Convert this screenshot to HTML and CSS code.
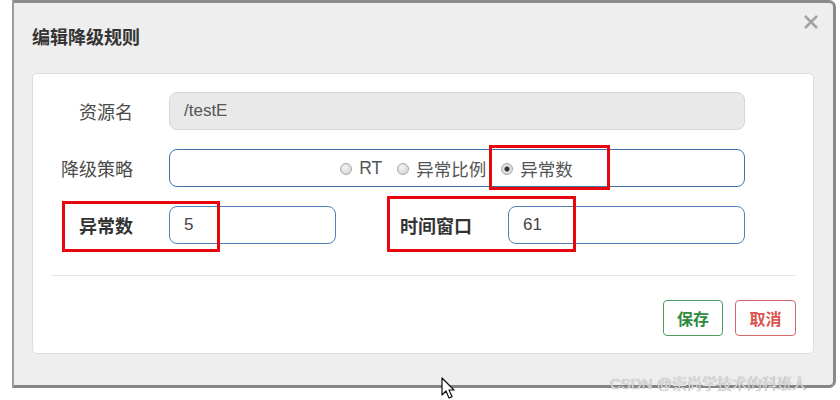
FILE: index.html
```html
<!DOCTYPE html>
<html lang="zh-CN">
<head>
    <meta charset="UTF-8">
    <title>编辑降级规则</title>
    <link rel="stylesheet" href="styles.css">
</head>
<body>
    <div class="modal">
        <div class="modal-header">
            <h1>编辑降级规则</h1>
            <span class="close">
                <svg width="14" height="14" viewBox="0 0 14 14"><path d="M1 1 L13 13 M13 1 L1 13" stroke="#a3a3a3" stroke-width="2.6" fill="none"/></svg>
            </span>
        </div>

        <div class="panel">
            <div class="row">
                <label class="label">资源名</label>
                <div class="field field-disabled">/testE</div>
            </div>

            <div class="row">
                <label class="label">降级策略</label>
                <div class="field field-radios">
                    <span class="radio"><i class="dot"></i>RT</span>
                    <span class="radio"><i class="dot"></i>异常比例</span>
                    <span class="radio"><i class="dot checked"></i>异常数</span>
                </div>
            </div>

            <div class="row row-split">
                <label class="label strong">异常数</label>
                <div class="field">5</div>
                <label class="label strong">时间窗口</label>
                <div class="field">61</div>
            </div>

            <hr class="divider">

            <div class="footer">
                <button class="btn btn-save">保存</button>
                <button class="btn btn-cancel">取消</button>
            </div>

            <!-- annotations -->
            <div class="mark mark-strategy"></div>
            <div class="mark mark-count"></div>
            <div class="mark mark-window"></div>
        </div>
    </div>

    <div class="watermark">CSDN @崇尚学技术的科班人</div>

    <svg class="cursor" width="14" height="24" viewBox="0 0 14 24">
        <path d="M1 1 L1 18 L5 14 L8 21 L11 19.6 L8 13 L13 13 Z" fill="#fff" stroke="#111" stroke-width="1.2" stroke-linejoin="round"/>
    </svg>
</body>
</html>
```

FILE: styles.css
```css
body, html {
    margin: 0;
    height: 100%;
    background-color: #fff;
    font-family: "Liberation Sans", "Noto Sans CJK SC", sans-serif;
    color: #444;
}

body {
    padding-left: 12px;
    position: relative;
    overflow: hidden;
}

.modal {
    box-sizing: border-box;
    width: 824px;
    height: 388px;
    background-color: #eeeeee;
    border-top: 3px solid #8c8c8c;
    border-left: 2px solid #9c9c9c;
    border-right: 3px solid #8a8a8a;
    border-bottom: 3px solid #858585;
    border-radius: 0 7px 7px 0;
    padding: 0 19px 0 18px;
}

.modal-header {
    height: 70px;
    display: flex;
    justify-content: space-between;
    align-items: center;
}

.modal-header h1 {
    margin: 0 0 4px 0;
    font-size: 18px;
    font-weight: bold;
    color: #333;
}

.close {
    align-self: flex-start;
    margin-top: 12px;
    margin-right: -4px;
    display: flex;
}

.panel {
    position: relative;
    background-color: #fff;
    border: 1px solid #dedede;
    border-radius: 5px;
    padding: 18px 17px 17px 18px;
}

.row {
    display: grid;
    grid-template-columns: 82px 576px;
    column-gap: 36px;
    align-items: center;
    margin-bottom: 19px;
}

.row-split {
    grid-template-columns: 82px 167px 100px 237px;
    margin-bottom: 0;
}

.label {
    text-align: right;
    font-size: 18px;
    color: #4a4a4a;
}

.label.strong {
    font-weight: bold;
    color: #333;
}

.field {
    box-sizing: border-box;
    height: 38px;
    border: 1px solid #4f82b8;
    border-radius: 8px;
    padding: 0 14px;
    display: flex;
    align-items: center;
    font-size: 17px;
    color: #444;
}

.field-disabled {
    background-color: #e9e9e9;
    border-color: #d6d6d6;
    color: #555;
}

.field-radios {
    justify-content: center;
    gap: 15px;
    padding-left: 13px;
    border-color: #3f72aa;
    font-size: 17.5px;
}

.radio {
    display: flex;
    align-items: center;
    gap: 7px;
    color: #555;
}

.dot {
    box-sizing: border-box;
    width: 12px;
    height: 12px;
    border-radius: 50%;
    border: 1px solid #a9a9a9;
    background: radial-gradient(circle at 40% 35%, #f4f4f4, #cfcfcf);
    margin-top: 1px;
}

.dot.checked {
    background: radial-gradient(circle, #333 0, #333 2px, #e2e2e2 3px, #d2d2d2);
}

.divider {
    border: 0;
    border-top: 1px solid #e6e6e6;
    margin: 31px 0 24px 0;
}

.footer {
    display: flex;
    justify-content: flex-end;
    gap: 12px;
}

.btn {
    height: 36px;
    width: 60px;
    background: #fff;
    border-radius: 4px;
    font-family: inherit;
    font-size: 16px;
    font-weight: bold;
    padding: 0;
}

.btn-save {
    border: 1px solid #4c9f5e;
    color: #2f8a3f;
}

.btn-cancel {
    width: 61px;
    border: 1px solid #d46a6a;
    color: #d9534f;
}

.mark {
    position: absolute;
    border: 3px solid #e8070c;
    box-sizing: border-box;
}

.mark-strategy {
    left: 456px;
    top: 71px;
    width: 121px;
    height: 45px;
}

.mark-count {
    left: 29px;
    top: 127px;
    width: 158px;
    height: 51px;
}

.mark-window {
    left: 354px;
    top: 122px;
    width: 189px;
    height: 56px;
}

.watermark {
    position: absolute;
    left: 610px;
    top: 372px;
    font-size: 15px;
    color: #dedede;
    text-shadow: 0 0 1px #8a8a8a;
    white-space: nowrap;
}

.cursor {
    position: absolute;
    left: 441px;
    top: 377px;
}
```
